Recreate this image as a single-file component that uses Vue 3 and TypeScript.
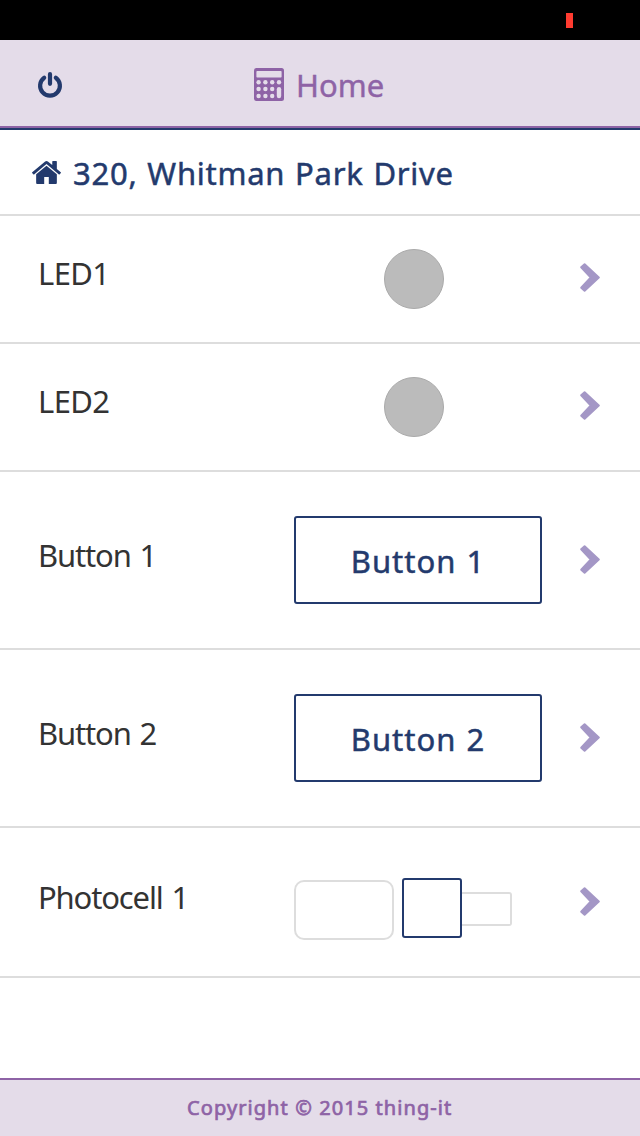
<script setup lang="ts">
type Kind = 'led' | 'button' | 'sensor'
interface Actor {
  name: string
  kind: Kind
}

const actors: Actor[] = [
  { name: 'LED1', kind: 'led' },
  { name: 'LED2', kind: 'led' },
  { name: 'Button 1', kind: 'button' },
  { name: 'Button 2', kind: 'button' },
  { name: 'Photocell 1', kind: 'sensor' },
]
const dotColumns = [4.6, 11.4, 18.2, 25]
const dotRows = [14.3, 21, 28]
</script>

<template>
  <div class="screen">
    <div class="status"><span class="battery"></span></div>
    <header class="header">
      <svg class="power" width="26" height="28" viewBox="0 0 26 28">
        <path d="M7.2 6.8A9.9 9.9 0 1 0 18.8 6.8M13 3.2V12.8" />
      </svg>
      <div class="title">
        <svg width="30" height="33" viewBox="0 0 30 33">
          <rect class="calc-body" width="30" height="33" rx="2.5" />
          <rect class="calc-hole" x="2.4" y="3" width="25.2" height="6.6" rx="0.8" />
          <template v-for="(y, r) in dotRows" :key="y">
            <template v-for="(x, c) in dotColumns" :key="x">
              <circle v-if="c < 3 || r === 0" class="calc-hole" :cx="x" :cy="y" r="2.2" />
            </template>
          </template>
          <rect class="calc-hole" x="22.8" y="19" width="4.4" height="11.2" rx="2.2" />
        </svg>
        <span class="title-text">Home</span>
      </div>
    </header>
    <div class="address">
      <svg width="29" height="23" viewBox="89 253 1614 1283" preserveAspectRatio="none">
        <path d="M1472 992v480q0 26-19 45t-45 19h-384v-384h-256v384h-384q-26 0-45-19t-19-45v-480q0-1 .5-3t.5-3l575-474 575 474q1 2 1 6zm223-69l-62 74q-8 9-21 11h-3q-13 0-21-7l-692-577-692 577q-12 8-24 7-13-2-21-11l-62-74q-8-10-7-23.5t11-21.5l719-599q32-26 76-26t76 26l244 204v-195q0-14 9-23t23-9h192q14 0 23 9t9 23v408l219 182q10 8 11 21.5t-7 23.5z" />
      </svg>
      <span class="address-text">320, Whitman Park Drive</span>
    </div>
    <main class="list">
      <div v-for="actor in actors" :key="actor.name" class="row" :class="actor.kind">
        <span class="label">{{ actor.name }}</span>
        <div class="control">
          <div v-if="actor.kind === 'led'" class="lamp"></div>
          <button v-else-if="actor.kind === 'button'" class="push">{{ actor.name }}</button>
          <div v-else class="slider">
            <div class="value"></div>
            <div class="handle"></div>
            <div class="track"></div>
          </div>
        </div>
        <svg class="chevron" width="20" height="29" viewBox="0 0 20 29">
          <path d="M4.6 1.2L18.8 14.5L4.6 27.8L1.2 24.8L10.8 14.5L1.2 4.2Z" />
        </svg>
      </div>
    </main>
    <footer class="footer"><span>Copyright © 2015 thing-it</span></footer>
  </div>
</template>

<style>
body {
  margin: 0;
}
</style>

<style scoped>
* {
  box-sizing: border-box;
}
.screen {
  display: flex;
  flex-direction: column;
  width: 640px;
  height: 1136px;
  overflow: hidden;
  background: #fff;
  color: #333;
  font-family: "Noto Sans", "Open Sans", sans-serif;
  font-size: 31px;
  line-height: 36px;
  white-space: nowrap;
}
svg {
  display: block;
  flex: none;
}
.status {
  height: 40px;
  flex: none;
  padding: 13px 67px 0 0;
  background: #000;
  display: flex;
  justify-content: flex-end;
}
.battery {
  width: 7px;
  height: 15px;
  background: #ff3b30;
}
.header {
  height: 90px;
  flex: none;
  display: flex;
  align-items: flex-start;
  background: #e4dce9;
  border-bottom: 2px solid #233a6d;
  box-shadow: inset 0 -2px #8e63a6;
  color: #8e63a6;
}
.power {
  margin: 31px 0 0 37px;
  fill: none;
  stroke: #233a6d;
  stroke-width: 4.2;
  stroke-linecap: round;
}
.title {
  display: flex;
  gap: 12px;
  margin: 28px 0 0 191px;
}
.title-text {
  margin-top: -1px;
  letter-spacing: 0;
  -webkit-text-stroke: 0.4px #8e63a6;
}
.calc-body {
  fill: #8e63a6;
}
.calc-hole {
  fill: #e4dce9;
}
.address {
  height: 86px;
  flex: none;
  display: flex;
  align-items: flex-start;
  gap: 12px;
  padding: 25px 0 0 32px;
  border-bottom: 2px solid #ddd;
  color: #233a6d;
}
.address svg {
  margin-top: 6px;
  fill: #233a6d;
}
.address-text {
  letter-spacing: 0.75px;
  word-spacing: 1px;
  -webkit-text-stroke: 0.5px #233a6d;
}
.list {
  flex: 1;
}
.row {
  display: flex;
  align-items: flex-start;
  border-bottom: 2px solid #ddd;
}
.led {
  height: 128px;
  padding-top: 33px;
}
.button {
  height: 178px;
  padding-top: 44px;
}
.sensor {
  height: 150px;
  padding-top: 50px;
}
.label {
  width: 256px;
  margin-left: 38px;
  padding-top: 1px;
  letter-spacing: -1.15px;
  word-spacing: 2px;
}
.led .label {
  margin-top: 5px;
  letter-spacing: -0.6px;
}
.button .label {
  margin-top: 20px;
}
.control {
  width: 286px;
}
.lamp {
  width: 60px;
  height: 60px;
  margin-left: 90px;
  border: 1px solid #aaa;
  border-radius: 50%;
  background: #bbb;
}
.push {
  display: block;
  width: 248px;
  height: 88px;
  padding: 2px 0 0;
  border: 2px solid #233a6d;
  border-radius: 3px;
  background: #fff;
  color: #233a6d;
  font: inherit;
  letter-spacing: 1px;
  word-spacing: 1px;
  -webkit-text-stroke: 0.5px #233a6d;
}
.slider {
  display: flex;
  align-items: flex-start;
}
.value {
  width: 100px;
  height: 60px;
  margin: 2px 8px 0 0;
  border: 2px solid #ddd;
  border-radius: 10px;
}
.handle {
  width: 60px;
  height: 60px;
  border: 2px solid #233a6d;
  border-radius: 3px;
}
.track {
  width: 50px;
  height: 34px;
  margin-top: 14px;
  border: 2px solid #ddd;
  border-left: 0;
  border-radius: 0 3px 3px 0;
}
.chevron {
  fill: #a497c6;
  stroke: #a497c6;
  stroke-width: 2;
  stroke-linejoin: round;
}
.led .chevron {
  margin-top: 14px;
}
.button .chevron {
  margin-top: 29px;
}
.sensor .chevron {
  margin-top: 9px;
}
.footer {
  height: 58px;
  flex: none;
  border-top: 2px solid #8e63a6;
  background: #e4dce9;
  color: #8e63a6;
  font-size: 20px;
  line-height: 55px;
  padding-left: 187px;
  letter-spacing: 1.08px;
  -webkit-text-stroke: 0.7px #8e63a6;
}
</style>
